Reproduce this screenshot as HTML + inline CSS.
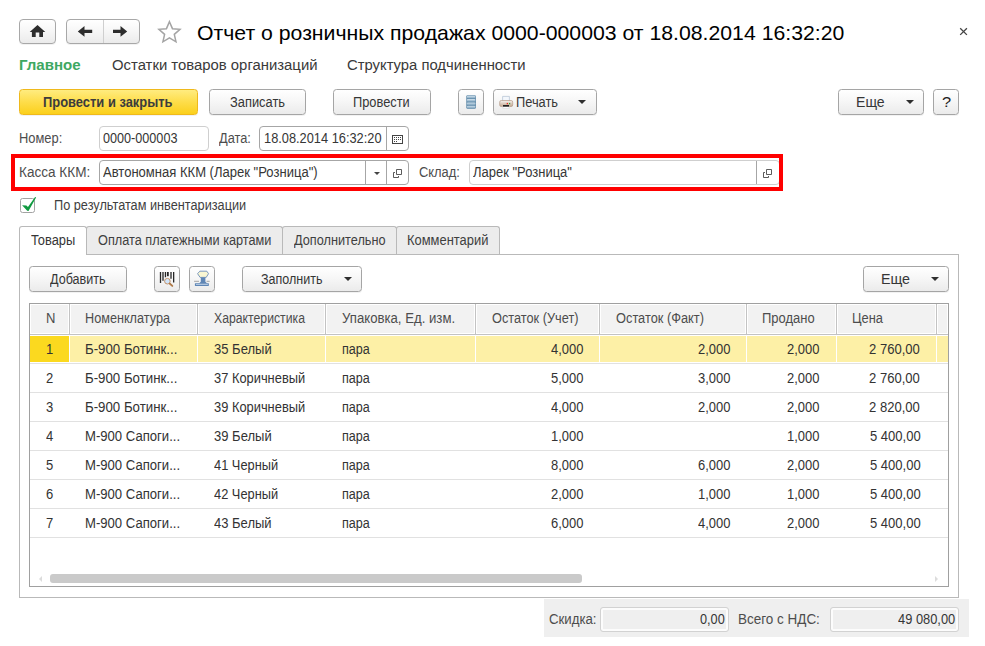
<!DOCTYPE html>
<html lang="ru">
<head>
<meta charset="utf-8">
<title>Отчет о розничных продажах 0000-000003 от 18.08.2014 16:32:20</title>
<style>
html,body{margin:0;padding:0;background:#fff;}
body{width:985px;height:646px;position:relative;overflow:hidden;font-family:"Liberation Sans",Arial,sans-serif;font-size:13px;color:#333;}
.a{position:absolute;}
.btn{position:absolute;box-sizing:border-box;height:26px;border:1px solid #a5a5a5;border-radius:3.500px;background:linear-gradient(#ffffff 0%,#f7f7f7 45%,#ebebeb 100%);box-shadow:0 1px 0 rgba(0,0,0,.05);}
.ybtn{background:linear-gradient(#ffec80 0%,#fedd4a 50%,#fbd01c 100%);border-color:#efb91c;}
.inp{position:absolute;box-sizing:border-box;height:25px;border:1px solid #a6a6a6;border-radius:4px;background:#fff;}
.inp.lt{border-color:#cfcfcf;}
.ro{position:absolute;box-sizing:border-box;height:25px;border:1px solid #d2d2d2;border-radius:3px;background:#efefef;box-shadow:inset 0 0 0 2px #fcfcfc;}
.t{position:absolute;white-space:nowrap;line-height:20px;height:20px;transform-origin:0 0;}
.arr{position:absolute;width:0;height:0;border-left:4px solid transparent;border-right:4px solid transparent;border-top:4.500px solid #2f2f2f;}
.tab{position:absolute;box-sizing:border-box;top:226px;height:28px;border:1px solid #b9b9b9;border-bottom:none;border-radius:3px 3px 0 0;background:#ececec;}
.hc{position:absolute;top:304px;height:30px;box-sizing:border-box;background:#f2f2f2;border:1px solid #fff;}
.hv{position:absolute;top:304px;height:30px;width:1px;background:#c3c3c3;}
.sep{position:absolute;left:30px;width:918px;height:1px;background:#e1e1e1;}
.yv{position:absolute;top:336px;height:26px;width:1px;background:#fff;}
</style>
</head>
<body>

<!-- navigation -->
<div class="btn" style="left:19px;top:19px;width:37px;height:25px;border-color:#a8a8a8;border-radius:4px;"></div>
<svg class="a" style="left:28px;top:23px" width="20" height="16" viewBox="28 23 20 16"><path d="M37.5 25 L45.3 31.900 H43 V36.900 H39.300 V32.400 H35.700 V36.900 H31.900 V31.900 H29.700 Z" fill="#2d2d2d"/></svg>
<div class="btn" style="left:66px;top:19px;width:74px;height:25px;border-color:#a8a8a8;border-radius:4px;"></div>
<div class="a" style="left:103px;top:20px;width:1px;height:23px;background:#cfcfcf;"></div>
<svg class="a" style="left:76px;top:24px" width="54" height="15" viewBox="76 24 54 15"><path d="M77.800 31.400 L84.500 26 V29.800 H92.200 V33.100 H84.500 V36.800 Z" fill="#2d2d2d"/><path d="M127.200 31.400 L120.500 26 V29.800 H113 V33.100 H120.500 V36.800 Z" fill="#2d2d2d"/></svg>
<svg class="a" style="left:155px;top:18px" width="29" height="27" viewBox="155 18 29 27"><path d="M169.45 21.70 L172.45 28.67 L180.01 29.37 L174.30 34.38 L175.97 41.78 L169.45 37.90 L162.93 41.78 L164.60 34.38 L158.89 29.37 L166.45 28.67 Z" fill="#fff" stroke="#a4a4a4" stroke-width="1.500" stroke-linejoin="miter"/></svg>
<svg class="a" style="left:958px;top:26px" width="11" height="11" viewBox="958 26 11 11"><path d="M960.200 28.200 L966.900 34.900 M966.900 28.200 L960.200 34.900" stroke="#444" stroke-width="1.300" fill="none"/></svg>

<!-- command bar -->
<div class="btn ybtn" style="left:19px;top:89px;width:179px;"></div>
<div class="btn" style="left:209px;top:89px;width:97px;"></div>
<div class="btn" style="left:333px;top:89px;width:98px;"></div>
<div class="btn" style="left:458px;top:89px;width:26px;"></div>
<svg class="a" style="left:466px;top:95px" width="11" height="15" viewBox="0 0 11 15"><defs><linearGradient id="bg" x1="0" y1="0" x2="0" y2="1"><stop offset="0" stop-color="#d3e3ee"/><stop offset="1" stop-color="#7ba1bc"/></linearGradient></defs><rect x="0.300" y="0.300" width="9.600" height="13.500" rx="1.300" fill="#5b86a6"/><rect x="0.900" y="0.800" width="8.400" height="2.700" rx=".8" fill="url(#bg)"/><rect x="0.900" y="4.100" width="8.400" height="2.700" rx=".8" fill="url(#bg)"/><rect x="0.900" y="7.400" width="8.400" height="2.700" rx=".8" fill="url(#bg)"/><rect x="0.900" y="10.700" width="8.400" height="2.600" rx=".8" fill="url(#bg)"/></svg>
<div class="btn" style="left:493px;top:89px;width:104px;"></div>
<svg class="a" style="left:499px;top:95px" width="15" height="15" viewBox="0 0 15 15"><defs><linearGradient id="pg" x1="0" y1="0" x2="0" y2="1"><stop offset="0" stop-color="#f6f3f0"/><stop offset="1" stop-color="#c4a68e"/></linearGradient></defs><path d="M3.600 1.400 H10.400 V6.500 H3.600 Z" fill="#f3f7fc" stroke="#b9c7d6" stroke-width=".8"/><rect x="0.700" y="5.500" width="13" height="6" rx="1.600" fill="url(#pg)" stroke="#b39a86" stroke-width=".7"/><rect x="7.700" y="7.900" width="1.300" height="1.300" fill="#e8281c"/><rect x="9.900" y="7.900" width="1.300" height="1.300" fill="#2ea02e"/><path d="M3.800 11.500 H10.200 V13.300 H3.800 Z" fill="#fff" stroke="#cfcfcf" stroke-width=".5"/><rect x="4" y="10.100" width="6" height="1.500" fill="#111"/></svg>
<div class="arr" style="left:578px;top:100px;"></div>
<div class="btn" style="left:838px;top:89px;width:86px;"></div>
<div class="arr" style="left:905.500px;top:100px;"></div>
<div class="btn" style="left:933px;top:89px;width:26px;"></div>

<!-- Номер / Дата -->
<div class="inp lt" style="left:99px;top:126px;width:110px;"></div>
<div class="inp" style="left:259px;top:126px;width:150px;"></div>
<div class="a" style="left:386px;top:127px;width:1px;height:23px;background:#a6a6a6;"></div>
<svg class="a" style="left:392px;top:135px" width="11" height="9" viewBox="0 0 11 9"><rect x="0.500" y="0.500" width="10" height="8" fill="#fff" stroke="#444"/><path d="M2 2h1v1h-1zM4 2h1v1h-1zM6 2h1v1h-1zM8 2h1v1h-1zM2 4h1v1h-1zM4 4h1v1h-1zM6 4h1v1h-1zM8 4h1v1h-1zM2 6h1v1h-1zM4 6h1v1h-1z" fill="#444"/></svg>

<!-- Касса ККМ / Склад -->
<div class="inp" style="left:99px;top:160px;width:310px;"></div>
<div class="a" style="left:365px;top:161px;width:1px;height:23px;background:#a6a6a6;"></div>
<div class="a" style="left:386px;top:161px;width:1px;height:23px;background:#a6a6a6;"></div>
<div class="arr" style="left:373.500px;top:172px;border-left-width:3px;border-right-width:3px;border-top:3px solid #444;"></div>
<svg class="a" style="left:393px;top:169px" width="10" height="10" viewBox="0 0 10 10"><path d="M3.500 0.500H8.500V5.500H3.500Z" fill="#fff" stroke="#484848" stroke-width=".9"/><path d="M2 3.500H0.500V8.500H5.500V7" fill="none" stroke="#484848" stroke-width=".9"/></svg>
<div class="inp lt" style="left:469px;top:160px;width:311px;"></div>
<div class="a" style="left:756px;top:161px;width:1px;height:23px;background:#a6a6a6;"></div>
<svg class="a" style="left:763px;top:169px" width="10" height="10" viewBox="0 0 10 10"><path d="M3.500 0.500H8.500V5.500H3.500Z" fill="#fff" stroke="#484848" stroke-width=".9"/><path d="M2 3.500H0.500V8.500H5.500V7" fill="none" stroke="#484848" stroke-width=".9"/></svg>
<div class="a" style="left:11px;top:154px;width:772px;height:37px;box-sizing:border-box;border:4px solid #ff0000;"></div>

<!-- checkbox -->
<div class="a" style="left:20px;top:198px;width:15px;height:15px;box-sizing:border-box;border:1px solid #a3a3a3;border-radius:2.500px;background:#fff;"></div>
<svg class="a" style="left:20px;top:195px" width="18" height="18" viewBox="20 195 18 18"><path d="M22.100 205.300 L26.400 205.400 L27.950 207.100 L35.100 196.900 L36.100 197.500 L28.500 210.900 L27.200 210.800 Z" fill="#109a40"/></svg>

<!-- tabs & panel -->
<div class="a" style="left:19px;top:254px;width:940px;height:344px;box-sizing:border-box;border:1px solid #b9b9b9;background:#fff;"></div>
<div class="tab" style="left:86px;width:197px;"></div>
<div class="tab" style="left:282px;width:115px;"></div>
<div class="tab" style="left:396px;width:104px;"></div>
<div class="tab" style="left:19px;width:68px;height:29px;background:#fff;"></div>

<!-- table toolbar -->
<div class="btn" style="left:29px;top:266px;width:98px;"></div>
<div class="btn" style="left:154px;top:266px;width:26px;"></div>
<svg class="a" style="left:159px;top:271px" width="16" height="17" viewBox="159 271 16 17"><path d="M160.500 272V283M163 272V280.800M165.450 272V277.300M171 272V278.700M173.650 272V282.600" stroke="#262626" stroke-width="1.300"/><path d="M167.850 272V276.200" stroke="#262626" stroke-width="1.800"/><circle cx="167.400" cy="281.200" r="2.800" fill="#cfe4fa" stroke="#c49268" stroke-width="1"/><path d="M169.900 283.700L172.300 285.900" stroke="#b07a48" stroke-width="1.900" stroke-linecap="round"/></svg>
<div class="btn" style="left:189px;top:266px;width:26px;"></div>
<svg class="a" style="left:193px;top:270px" width="18" height="17" viewBox="193 270 18 17"><path d="M199.800 271.200 H206.800 L208.500 273.700 L206.200 277.400 H200.100 L197.600 273.700 Z" fill="#f9f6d2" stroke="#6c8dba" stroke-width=".9" stroke-linejoin="round"/><path d="M200.800 277.400 H205.400 V281.800 L207 283.300 H199.200 L200.800 281.800 Z" fill="#5f86b5"/><path d="M194.100 281.300H199M206.600 281.300H209.700" stroke="#9a9a9a" stroke-width=".9"/><rect x="194.900" y="283.200" width="13.950" height="2.700" rx=".4" fill="#5f86b5"/><path d="M196 284.500H207.800" stroke="#c4d6ea" stroke-width=".8"/></svg>
<div class="btn" style="left:242px;top:266px;width:120px;"></div>
<div class="arr" style="left:343.700px;top:277px;"></div>
<div class="btn" style="left:863px;top:266px;width:86px;"></div>
<div class="arr" style="left:930.500px;top:277px;"></div>

<!-- table -->
<div class="a" style="left:29px;top:303px;width:920px;height:284px;box-sizing:border-box;border:1px solid #a0a0a0;background:#fff;"></div>
<div class="a" style="left:30px;top:334px;width:918px;height:1px;background:#c3c3c3;"></div>
<div class="hc" style="left:30px;width:39px;"></div>
<div class="hc" style="left:70px;width:127px;"></div>
<div class="hc" style="left:198px;width:127px;"></div>
<div class="hc" style="left:326px;width:149px;"></div>
<div class="hc" style="left:476px;width:123px;"></div>
<div class="hc" style="left:600px;width:146px;"></div>
<div class="hc" style="left:747px;width:89px;"></div>
<div class="hc" style="left:837px;width:99px;"></div>
<div class="hc" style="left:937px;width:11px;"></div>
<div class="hv" style="left:69px;"></div>
<div class="hv" style="left:197px;"></div>
<div class="hv" style="left:325px;"></div>
<div class="hv" style="left:475px;"></div>
<div class="hv" style="left:599px;"></div>
<div class="hv" style="left:746px;"></div>
<div class="hv" style="left:836px;"></div>
<div class="hv" style="left:936px;"></div>

<!-- selected row -->
<div class="a" style="left:30px;top:336px;width:918px;height:26px;background:#fdf0a6;"></div>
<div class="a" style="left:30px;top:336px;width:39px;height:26px;background:#fbd91f;"></div>
<div class="yv" style="left:69px;"></div>
<div class="yv" style="left:197px;"></div>
<div class="yv" style="left:325px;"></div>
<div class="yv" style="left:475px;"></div>
<div class="yv" style="left:599px;"></div>
<div class="yv" style="left:746px;"></div>
<div class="yv" style="left:836px;"></div>
<div class="yv" style="left:936px;"></div>
<div class="sep" style="top:363px;"></div>
<div class="sep" style="top:392px;"></div>
<div class="sep" style="top:421px;"></div>
<div class="sep" style="top:450px;"></div>
<div class="sep" style="top:479px;"></div>
<div class="sep" style="top:508px;"></div>
<div class="sep" style="top:537px;"></div>

<!-- scrollbar -->
<div class="a" style="left:50px;top:574px;width:532px;height:9px;border-radius:3px;background:#cacaca;"></div>
<div class="a" style="left:39px;top:575.500px;width:0;height:0;border-top:3px solid transparent;border-bottom:3px solid transparent;border-right:3.500px solid #dcdcdc;"></div>
<div class="a" style="left:935px;top:575.500px;width:0;height:0;border-top:3px solid transparent;border-bottom:3px solid transparent;border-left:3.500px solid #dcdcdc;"></div>

<!-- footer -->
<div class="a" style="left:544px;top:599px;width:425px;height:38px;background:#efefef;"></div>
<div class="ro" style="left:600px;top:607px;width:129px;"></div>
<div class="ro" style="left:830px;top:607px;width:129px;"></div>

<div class="t" style="left:197.25px;top:22.72px;font-size:21px;color:#000;transform:scaleX(1.0112);">Отчет о розничных продажах 0000-000003 от 18.08.2014 16:32:20</div>
<div class="t" style="left:19.00px;top:54.66px;font-size:15.4px;color:#3ea862;transform:scaleX(0.9785);font-weight:bold;">Главное</div>
<div class="t" style="left:112.20px;top:54.66px;font-size:15.4px;color:#3a3a3a;transform:scaleX(0.9663);">Остатки товаров организаций</div>
<div class="t" style="left:346.96px;top:54.66px;font-size:15.4px;color:#3a3a3a;transform:scaleX(0.9630);">Структура подчиненности</div>
<div class="t" style="left:43.32px;top:92.15px;font-size:14px;color:#3c3c3c;transform:scaleX(0.9228);font-weight:bold;">Провести и закрыть</div>
<div class="t" style="left:230.21px;top:92.15px;font-size:14px;color:#363636;transform:scaleX(0.9195);">Записать</div>
<div class="t" style="left:353.17px;top:92.15px;font-size:14px;color:#363636;transform:scaleX(0.9156);">Провести</div>
<div class="t" style="left:515.88px;top:92.15px;font-size:14px;color:#363636;transform:scaleX(0.9147);">Печать</div>
<div class="t" style="left:856.27px;top:92.15px;font-size:14px;color:#363636;transform:scaleX(1.0052);">Еще</div>
<div class="t" style="left:941.64px;top:91.80px;font-size:15px;color:#222;transform:scaleX(1.0972);">?</div>
<div class="t" style="left:19.17px;top:128.15px;font-size:14px;color:#4d4d4d;transform:scaleX(0.9208);">Номер:</div>
<div class="t" style="left:103.02px;top:128.15px;font-size:14px;color:#363636;transform:scaleX(0.9020);">0000-000003</div>
<div class="t" style="left:219.20px;top:128.15px;font-size:14px;color:#4d4d4d;transform:scaleX(0.9150);">Дата:</div>
<div class="t" style="left:263.50px;top:128.15px;font-size:14px;color:#363636;transform:scaleX(0.9152);">18.08.2014 16:32:20</div>
<div class="t" style="left:19.11px;top:162.15px;font-size:14px;color:#4d4d4d;transform:scaleX(0.9701);">Касса ККМ:</div>
<div class="t" style="left:103.40px;top:162.15px;font-size:14px;color:#363636;transform:scaleX(0.9312);">Автономная ККМ (Ларек &quot;Розница&quot;)</div>
<div class="t" style="left:418.86px;top:162.15px;font-size:14px;color:#4d4d4d;transform:scaleX(0.9205);">Склад:</div>
<div class="t" style="left:473.20px;top:162.15px;font-size:14px;color:#363636;transform:scaleX(0.9280);">Ларек &quot;Розница&quot;</div>
<div class="t" style="left:54.18px;top:195.15px;font-size:14px;color:#3f3f3f;transform:scaleX(0.9088);">По результатам инвентаризации</div>
<div class="t" style="left:31.34px;top:230.15px;font-size:14px;color:#363636;transform:scaleX(0.9186);">Товары</div>
<div class="t" style="left:97.79px;top:230.15px;font-size:14px;color:#3f3f3f;transform:scaleX(0.9090);">Оплата платежными картами</div>
<div class="t" style="left:293.60px;top:230.15px;font-size:14px;color:#3f3f3f;transform:scaleX(0.9087);">Дополнительно</div>
<div class="t" style="left:407.27px;top:230.15px;font-size:14px;color:#3f3f3f;transform:scaleX(0.9234);">Комментарий</div>
<div class="t" style="left:49.90px;top:269.15px;font-size:14px;color:#363636;transform:scaleX(0.8989);">Добавить</div>
<div class="t" style="left:261.12px;top:269.15px;font-size:14px;color:#363636;transform:scaleX(0.8947);">Заполнить</div>
<div class="t" style="left:881.16px;top:269.15px;font-size:14px;color:#363636;transform:scaleX(1.0201);">Еще</div>
<div class="t" style="left:45.70px;top:308.15px;font-size:14px;color:#4d4d4d;transform:scaleX(0.9300);">N</div>
<div class="t" style="left:85.49px;top:308.15px;font-size:14px;color:#4d4d4d;transform:scaleX(0.9043);">Номенклатура</div>
<div class="t" style="left:213.86px;top:308.15px;font-size:14px;color:#4d4d4d;transform:scaleX(0.8743);">Характеристика</div>
<div class="t" style="left:342.14px;top:308.15px;font-size:14px;color:#4d4d4d;transform:scaleX(0.9413);">Упаковка, Ед. изм.</div>
<div class="t" style="left:492.39px;top:308.15px;font-size:14px;color:#4d4d4d;transform:scaleX(0.9111);">Остаток (Учет)</div>
<div class="t" style="left:616.39px;top:308.15px;font-size:14px;color:#4d4d4d;transform:scaleX(0.9154);">Остаток (Факт)</div>
<div class="t" style="left:762.36px;top:308.15px;font-size:14px;color:#4d4d4d;transform:scaleX(0.9280);">Продано</div>
<div class="t" style="left:852.47px;top:308.15px;font-size:14px;color:#4d4d4d;transform:scaleX(0.9204);">Цена</div>
<div class="t" style="left:45.77px;top:339.15px;font-size:14px;color:#333;transform:scaleX(0.9300);">1</div>
<div class="t" style="left:85.44px;top:339.15px;font-size:14px;color:#333;transform:scaleX(0.9467);">Б-900 Ботинк...</div>
<div class="t" style="left:213.91px;top:339.15px;font-size:14px;color:#333;transform:scaleX(0.9300);">35 Белый</div>
<div class="t" style="left:341.65px;top:339.15px;font-size:14px;color:#333;transform:scaleX(0.8987);">пара</div>
<div class="t" style="left:550.86px;top:339.15px;font-size:14px;color:#333;transform:scaleX(0.9250);">4,000</div>
<div class="t" style="left:697.66px;top:339.15px;font-size:14px;color:#333;transform:scaleX(0.9250);">2,000</div>
<div class="t" style="left:787.46px;top:339.15px;font-size:14px;color:#333;transform:scaleX(0.9250);">2,000</div>
<div class="t" style="left:869.45px;top:339.15px;font-size:14px;color:#333;transform:scaleX(0.9326);">2 760,00</div>
<div class="t" style="left:45.90px;top:368.15px;font-size:14px;color:#333;transform:scaleX(0.9300);">2</div>
<div class="t" style="left:85.44px;top:368.15px;font-size:14px;color:#333;transform:scaleX(0.9467);">Б-900 Ботинк...</div>
<div class="t" style="left:213.91px;top:368.15px;font-size:14px;color:#333;transform:scaleX(0.9196);">37 Коричневый</div>
<div class="t" style="left:341.65px;top:368.15px;font-size:14px;color:#333;transform:scaleX(0.8987);">пара</div>
<div class="t" style="left:550.86px;top:368.15px;font-size:14px;color:#333;transform:scaleX(0.9250);">5,000</div>
<div class="t" style="left:697.66px;top:368.15px;font-size:14px;color:#333;transform:scaleX(0.9250);">3,000</div>
<div class="t" style="left:787.46px;top:368.15px;font-size:14px;color:#333;transform:scaleX(0.9250);">2,000</div>
<div class="t" style="left:869.45px;top:368.15px;font-size:14px;color:#333;transform:scaleX(0.9326);">2 760,00</div>
<div class="t" style="left:45.97px;top:397.15px;font-size:14px;color:#333;transform:scaleX(0.9300);">3</div>
<div class="t" style="left:85.44px;top:397.15px;font-size:14px;color:#333;transform:scaleX(0.9467);">Б-900 Ботинк...</div>
<div class="t" style="left:213.91px;top:397.15px;font-size:14px;color:#333;transform:scaleX(0.9196);">39 Коричневый</div>
<div class="t" style="left:341.65px;top:397.15px;font-size:14px;color:#333;transform:scaleX(0.8987);">пара</div>
<div class="t" style="left:550.86px;top:397.15px;font-size:14px;color:#333;transform:scaleX(0.9250);">4,000</div>
<div class="t" style="left:697.66px;top:397.15px;font-size:14px;color:#333;transform:scaleX(0.9250);">2,000</div>
<div class="t" style="left:787.46px;top:397.15px;font-size:14px;color:#333;transform:scaleX(0.9250);">2,000</div>
<div class="t" style="left:869.45px;top:397.15px;font-size:14px;color:#333;transform:scaleX(0.9326);">2 820,00</div>
<div class="t" style="left:45.97px;top:426.15px;font-size:14px;color:#333;transform:scaleX(0.9300);">4</div>
<div class="t" style="left:85.45px;top:426.15px;font-size:14px;color:#333;transform:scaleX(0.9361);">М-900 Сапоги...</div>
<div class="t" style="left:213.91px;top:426.15px;font-size:14px;color:#333;transform:scaleX(0.9300);">39 Белый</div>
<div class="t" style="left:341.65px;top:426.15px;font-size:14px;color:#333;transform:scaleX(0.8987);">пара</div>
<div class="t" style="left:550.86px;top:426.15px;font-size:14px;color:#333;transform:scaleX(0.9250);">1,000</div>
<div class="t" style="left:787.46px;top:426.15px;font-size:14px;color:#333;transform:scaleX(0.9250);">1,000</div>
<div class="t" style="left:869.58px;top:426.15px;font-size:14px;color:#333;transform:scaleX(0.9302);">5 400,00</div>
<div class="t" style="left:45.90px;top:455.15px;font-size:14px;color:#333;transform:scaleX(0.9300);">5</div>
<div class="t" style="left:85.45px;top:455.15px;font-size:14px;color:#333;transform:scaleX(0.9361);">М-900 Сапоги...</div>
<div class="t" style="left:214.04px;top:455.15px;font-size:14px;color:#333;transform:scaleX(0.9165);">41 Черный</div>
<div class="t" style="left:341.65px;top:455.15px;font-size:14px;color:#333;transform:scaleX(0.8987);">пара</div>
<div class="t" style="left:550.86px;top:455.15px;font-size:14px;color:#333;transform:scaleX(0.9250);">8,000</div>
<div class="t" style="left:697.66px;top:455.15px;font-size:14px;color:#333;transform:scaleX(0.9250);">6,000</div>
<div class="t" style="left:787.46px;top:455.15px;font-size:14px;color:#333;transform:scaleX(0.9250);">2,000</div>
<div class="t" style="left:869.58px;top:455.15px;font-size:14px;color:#333;transform:scaleX(0.9302);">5 400,00</div>
<div class="t" style="left:45.84px;top:484.15px;font-size:14px;color:#333;transform:scaleX(0.9300);">6</div>
<div class="t" style="left:85.45px;top:484.15px;font-size:14px;color:#333;transform:scaleX(0.9361);">М-900 Сапоги...</div>
<div class="t" style="left:214.04px;top:484.15px;font-size:14px;color:#333;transform:scaleX(0.9165);">42 Черный</div>
<div class="t" style="left:341.65px;top:484.15px;font-size:14px;color:#333;transform:scaleX(0.8987);">пара</div>
<div class="t" style="left:550.86px;top:484.15px;font-size:14px;color:#333;transform:scaleX(0.9250);">2,000</div>
<div class="t" style="left:697.66px;top:484.15px;font-size:14px;color:#333;transform:scaleX(0.9250);">1,000</div>
<div class="t" style="left:787.46px;top:484.15px;font-size:14px;color:#333;transform:scaleX(0.9250);">1,000</div>
<div class="t" style="left:869.58px;top:484.15px;font-size:14px;color:#333;transform:scaleX(0.9302);">5 400,00</div>
<div class="t" style="left:45.90px;top:513.15px;font-size:14px;color:#333;transform:scaleX(0.9300);">7</div>
<div class="t" style="left:85.45px;top:513.15px;font-size:14px;color:#333;transform:scaleX(0.9361);">М-900 Сапоги...</div>
<div class="t" style="left:214.04px;top:513.15px;font-size:14px;color:#333;transform:scaleX(0.9279);">43 Белый</div>
<div class="t" style="left:341.65px;top:513.15px;font-size:14px;color:#333;transform:scaleX(0.8987);">пара</div>
<div class="t" style="left:550.86px;top:513.15px;font-size:14px;color:#333;transform:scaleX(0.9250);">6,000</div>
<div class="t" style="left:697.66px;top:513.15px;font-size:14px;color:#333;transform:scaleX(0.9250);">4,000</div>
<div class="t" style="left:787.46px;top:513.15px;font-size:14px;color:#333;transform:scaleX(0.9250);">2,000</div>
<div class="t" style="left:869.58px;top:513.15px;font-size:14px;color:#333;transform:scaleX(0.9302);">5 400,00</div>
<div class="t" style="left:548.84px;top:609.15px;font-size:14px;color:#4d4d4d;transform:scaleX(0.9441);">Скидка:</div>
<div class="t" style="left:700.32px;top:609.15px;font-size:14px;color:#363636;transform:scaleX(0.9080);">0,00</div>
<div class="t" style="left:738.42px;top:609.15px;font-size:14px;color:#4d4d4d;transform:scaleX(0.9622);">Всего с НДС:</div>
<div class="t" style="left:897.74px;top:609.15px;font-size:14px;color:#363636;transform:scaleX(0.9188);">49 080,00</div>

</body>
</html>
